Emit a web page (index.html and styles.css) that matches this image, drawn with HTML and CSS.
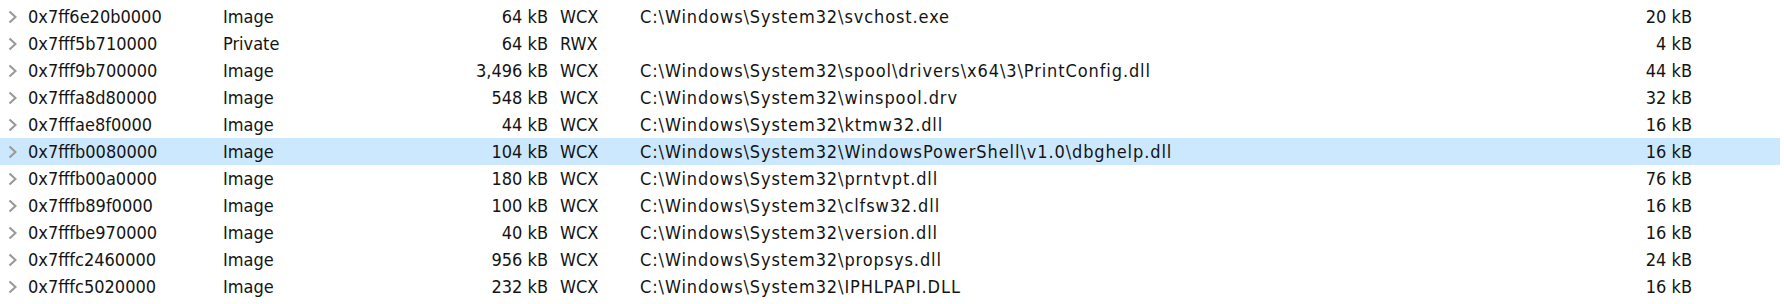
FILE: index.html
```html
<!DOCTYPE html>
<html lang="en">
<head>
    <meta charset="UTF-8">
    <title>Memory regions</title>
    <link rel="stylesheet" href="styles.css">
</head>
<body>

    <div class="regions">
        <div class="row">
            <span class="chev"><svg width="9" height="14" viewBox="0 0 9 14"><polyline points="1.5,1.5 7.5,7 1.5,12.5"/></svg></span>
            <span>0x7ff6e20b0000</span><span>Image</span><span class="num">64 kB</span><span class="prot">WCX</span>
            <span class="path">C:\Windows\System32\svchost.exe</span><span class="num">20 kB</span>
        </div>
        <div class="row">
            <span class="chev"><svg width="9" height="14" viewBox="0 0 9 14"><polyline points="1.5,1.5 7.5,7 1.5,12.5"/></svg></span>
            <span>0x7fff5b710000</span><span>Private</span><span class="num">64 kB</span><span class="prot">RWX</span>
            <span class="path"></span><span class="num">4 kB</span>
        </div>
        <div class="row">
            <span class="chev"><svg width="9" height="14" viewBox="0 0 9 14"><polyline points="1.5,1.5 7.5,7 1.5,12.5"/></svg></span>
            <span>0x7fff9b700000</span><span>Image</span><span class="num">3,496 kB</span><span class="prot">WCX</span>
            <span class="path">C:\Windows\System32\spool\drivers\x64\3\PrintConfig.dll</span><span class="num">44 kB</span>
        </div>
        <div class="row">
            <span class="chev"><svg width="9" height="14" viewBox="0 0 9 14"><polyline points="1.5,1.5 7.5,7 1.5,12.5"/></svg></span>
            <span>0x7fffa8d80000</span><span>Image</span><span class="num">548 kB</span><span class="prot">WCX</span>
            <span class="path">C:\Windows\System32\winspool.drv</span><span class="num">32 kB</span>
        </div>
        <div class="row">
            <span class="chev"><svg width="9" height="14" viewBox="0 0 9 14"><polyline points="1.5,1.5 7.5,7 1.5,12.5"/></svg></span>
            <span>0x7fffae8f0000</span><span>Image</span><span class="num">44 kB</span><span class="prot">WCX</span>
            <span class="path">C:\Windows\System32\ktmw32.dll</span><span class="num">16 kB</span>
        </div>
        <div class="row selected">
            <span class="chev"><svg width="9" height="14" viewBox="0 0 9 14"><polyline points="1.5,1.5 7.5,7 1.5,12.5"/></svg></span>
            <span>0x7fffb0080000</span><span>Image</span><span class="num">104 kB</span><span class="prot">WCX</span>
            <span class="path">C:\Windows\System32\WindowsPowerShell\v1.0\dbghelp.dll</span><span class="num">16 kB</span>
        </div>
        <div class="row">
            <span class="chev"><svg width="9" height="14" viewBox="0 0 9 14"><polyline points="1.5,1.5 7.5,7 1.5,12.5"/></svg></span>
            <span>0x7fffb00a0000</span><span>Image</span><span class="num">180 kB</span><span class="prot">WCX</span>
            <span class="path">C:\Windows\System32\prntvpt.dll</span><span class="num">76 kB</span>
        </div>
        <div class="row">
            <span class="chev"><svg width="9" height="14" viewBox="0 0 9 14"><polyline points="1.5,1.5 7.5,7 1.5,12.5"/></svg></span>
            <span>0x7fffb89f0000</span><span>Image</span><span class="num">100 kB</span><span class="prot">WCX</span>
            <span class="path">C:\Windows\System32\clfsw32.dll</span><span class="num">16 kB</span>
        </div>
        <div class="row">
            <span class="chev"><svg width="9" height="14" viewBox="0 0 9 14"><polyline points="1.5,1.5 7.5,7 1.5,12.5"/></svg></span>
            <span>0x7fffbe970000</span><span>Image</span><span class="num">40 kB</span><span class="prot">WCX</span>
            <span class="path">C:\Windows\System32\version.dll</span><span class="num">16 kB</span>
        </div>
        <div class="row">
            <span class="chev"><svg width="9" height="14" viewBox="0 0 9 14"><polyline points="1.5,1.5 7.5,7 1.5,12.5"/></svg></span>
            <span>0x7fffc2460000</span><span>Image</span><span class="num">956 kB</span><span class="prot">WCX</span>
            <span class="path">C:\Windows\System32\propsys.dll</span><span class="num">24 kB</span>
        </div>
        <div class="row">
            <span class="chev"><svg width="9" height="14" viewBox="0 0 9 14"><polyline points="1.5,1.5 7.5,7 1.5,12.5"/></svg></span>
            <span>0x7fffc5020000</span><span>Image</span><span class="num">232 kB</span><span class="prot">WCX</span>
            <span class="path">C:\Windows\System32\IPHLPAPI.DLL</span><span class="num">16 kB</span>
        </div>
    </div>

</body>
</html>
```

FILE: styles.css
```css
body {
    margin: 0;
    padding: 0;
    background: #fff;
    color: #141414;
    font-family: "DejaVu Sans Condensed", "DejaVu Sans", sans-serif;
    font-size: 18px;
    overflow: hidden;
}

.regions {
    width: 1780px;
    padding-top: 3px;
}

/* one line per memory region */
.row {
    display: grid;
    grid-template-columns: 28px 195px 197px 128px 92px 960px 92px;
    align-items: center;
    height: 27px;
    white-space: nowrap;
}

.row.selected {
    background: #cce8ff;
}

.chev {
    display: flex;
    padding-left: 8px;
}

.chev polyline {
    fill: none;
    stroke: #999;
    stroke-width: 2.2;
}

.num {
    text-align: right;
}

.prot {
    padding-left: 12px;
}

/* wider letters for the paths, closer to the original font */
.path {
    letter-spacing: 0.9px;
}
```
